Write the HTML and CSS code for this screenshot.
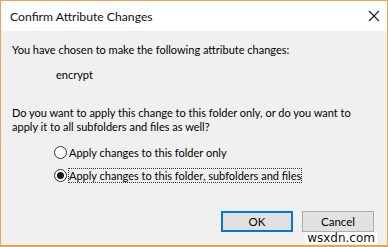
FILE: index.html
```html
<!DOCTYPE html>
<html>
<head>
<meta charset="utf-8">
<link rel="stylesheet" href="styles.css">
</head>
<body>
<div class="dialog">
  <div class="titlebar">
    <span class="title">Confirm Attribute Changes</span>
    <svg class="close" width="12" height="12" viewBox="0 0 12 12"><path d="M1 1 L11 11 M11 1 L1 11" stroke="#1a1a1a" stroke-width="1.1" fill="none"/></svg>
  </div>
  <div class="body">
    <p class="intro">You have chosen to make the following attribute changes:</p>
    <p class="attr">encrypt</p>
    <p class="question">Do you want to apply this change to this folder only, or do you want to apply it to all subfolders and files as well?</p>
    <div class="options">
      <label class="opt"><span class="radio"></span><span class="lbl">Apply changes to this folder only</span></label>
      <label class="opt"><span class="radio checked"></span><span class="lbl focus">Apply changes to this folder, subfolders and files</span></label>
    </div>
    <div class="buttons">
      <button class="btn default">OK</button>
      <button class="btn">Cancel</button>
    </div>
  </div>
  <span class="watermark">wsxdn.com</span>
</div>
</body>
</html>
```
FILE: styles.css
```css
html, body { margin: 0; padding: 0; }
body { width: 388px; height: 247px; overflow: hidden; font-family: "Lato", "Noto Sans", sans-serif; font-size: 11px; color: #000; }
.dialog { position: relative; box-sizing: border-box; width: 388px; height: 247px; border: 1px solid #e8a553; border-bottom-width: 2px; background: #f0f0f0; display: flex; flex-direction: column; }
.titlebar { height: 30px; background: #fff; display: flex; align-items: center; justify-content: space-between; padding: 0 7px 0 9px; }
.title { font-size: 12.2px; color: #111; }
.body { flex: 1; display: flex; flex-direction: column; padding: 0 12px 0 11px; }
p { margin: 0; line-height: 14px; }
.intro { margin-top: 12px; }
.attr { margin-top: 11px; padding-left: 44px; }
.question { margin-top: 24px; width: 350px; }
.options { display: flex; flex-direction: column; gap: 9px; margin-top: 11px; padding-left: 42px; }
.opt { display: flex; align-items: center; height: 14px; }
.radio { width: 11px; height: 11px; border: 1px solid #333; border-radius: 50%; background: #fff; margin-right: 2px; display: flex; align-items: center; justify-content: center; }
.radio.checked::after { content: ""; width: 7px; height: 7px; border-radius: 50%; background: #1a1a1a; }
.lbl.focus { outline: 1px dotted #333; outline-offset: 0; }
.buttons { display: flex; justify-content: flex-end; gap: 9px; margin-top: 29px; padding-right: 1px; }
.btn { width: 72px; height: 21px; box-sizing: border-box; background: #e1e1e1; border: 1px solid #adadad; font: inherit; font-size: 11.5px; color: #000; padding: 0; }
.btn.default { border: 2px solid #0078d7; }
.watermark { position: absolute; right: 10px; bottom: 1px; font-family: "DejaVu Sans", sans-serif; font-size: 12px; line-height: 12px; background: #fff; color: #111; padding: 0 2px; }
```
